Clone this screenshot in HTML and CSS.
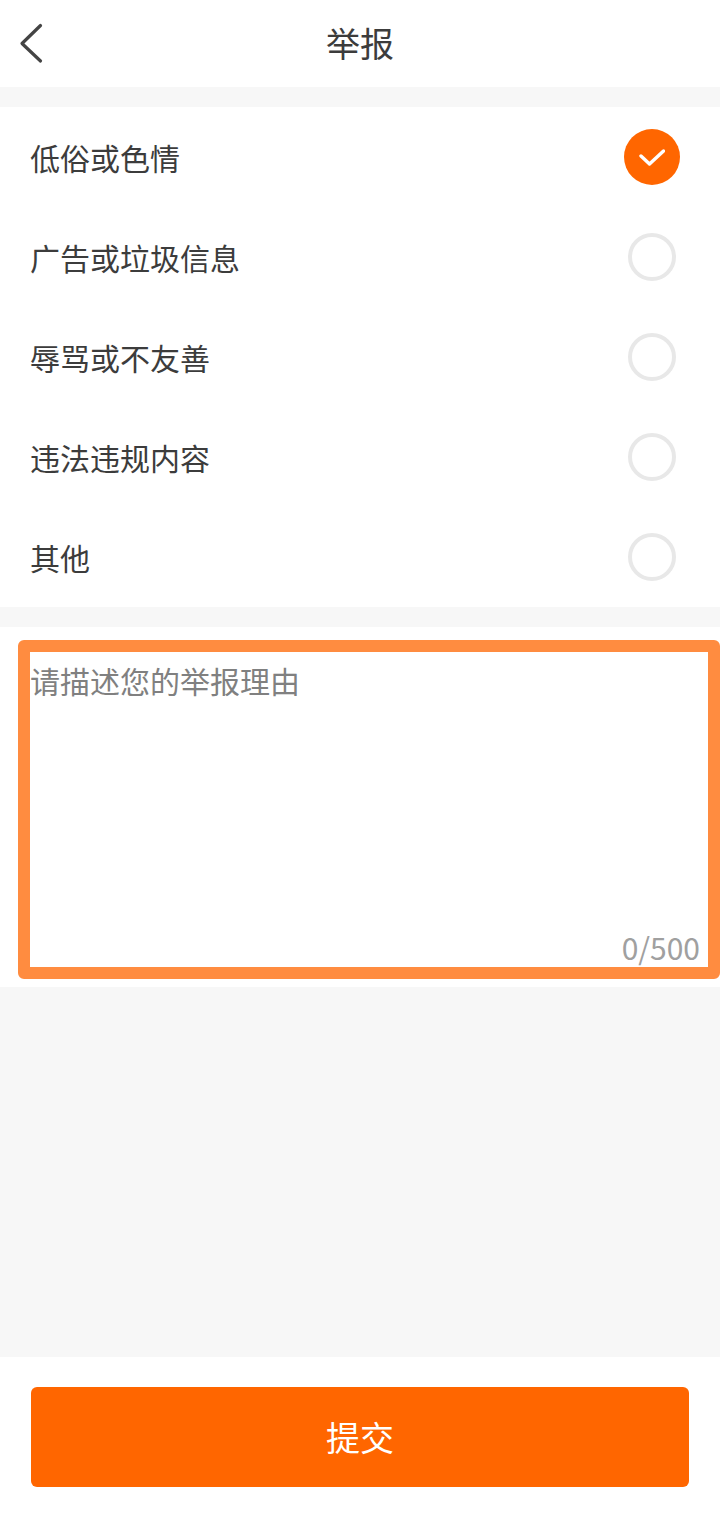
FILE: index.html
```html
<!DOCTYPE html>
<html lang="zh-CN">
<head>
    <meta charset="utf-8">
    <meta name="viewport" content="width=device-width, initial-scale=1.0">
    <link rel="stylesheet" href="styles.css">
</head>
<body>
    <div class="header">
        <svg class="back-icon" width="26" height="42" viewBox="0 0 26 42" aria-label="返回">
            <path d="M21.5 2.5 L3 20.5 L21.5 38" fill="none" stroke="#444" stroke-width="3.2" stroke-linecap="round" stroke-linejoin="round"/>
        </svg>
        <div class="title">举报</div>
    </div>

    <div class="reason-list">
        <div class="reason-item">
            <span class="reason-label">低俗或色情</span>
            <span class="radio checked">
                <svg width="26" height="20" viewBox="0 0 26 20">
                    <path d="M2 9 L10.5 17 L24.5 4" fill="none" stroke="#fff" stroke-width="3.4" stroke-linecap="round" stroke-linejoin="round"/>
                </svg>
            </span>
        </div>
        <div class="reason-item">
            <span class="reason-label">广告或垃圾信息</span>
            <span class="radio"></span>
        </div>
        <div class="reason-item">
            <span class="reason-label">辱骂或不友善</span>
            <span class="radio"></span>
        </div>
        <div class="reason-item">
            <span class="reason-label">违法违规内容</span>
            <span class="radio"></span>
        </div>
        <div class="reason-item">
            <span class="reason-label">其他</span>
            <span class="radio"></span>
        </div>
    </div>

    <div class="reason-box">
        <div class="reason-input">
            <div class="placeholder">请描述您的举报理由</div>
            <div class="counter">0/500</div>
        </div>
    </div>

    <div class="spacer"></div>

    <div class="footer">
        <button class="submit-button">提交</button>
    </div>
</body>
</html>
```

FILE: styles.css
```css
* {
    box-sizing: border-box;
}

html, body {
    height: 100%;
}

body {
    margin: 0;
    display: flex;
    flex-direction: column;
    background: #f7f7f7;
    color: #3c3c3c;
    font-family: "Noto Sans CJK SC", "Noto Sans", sans-serif;
}

.header {
    height: 87px;
    padding-bottom: 2px;
    position: relative;
    display: flex;
    align-items: center;
    justify-content: center;
    background: #fff;
}

.back-icon {
    position: absolute;
    left: 19px;
    top: 23px;
}

.title {
    font-size: 34px;
    line-height: 44px;
    color: #3c3c3c;
}

.reason-list {
    margin-top: 20px;
    background: #fff;
}

.reason-item {
    height: 100px;
    padding: 0 44px 0 30px;
    display: flex;
    align-items: center;
    justify-content: space-between;
}

.reason-label {
    font-size: 30px;
    line-height: 40px;
    color: #3c3c3c;
}

.radio {
    width: 48px;
    height: 48px;
    border-radius: 50%;
    border: 4px solid #e8e8e8;
    display: flex;
    align-items: center;
    justify-content: center;
}

.radio.checked {
    width: 56px;
    height: 56px;
    margin-right: -4px;
    border: none;
    background: #ff6600;
}

.reason-box {
    margin-top: 20px;
    height: 360px;
    padding: 13px 0 8px 18px;
    background: #fff;
}

.reason-input {
    height: 339px;
    position: relative;
    padding-top: 8px;
    background: #fff;
    border: 12px solid #ff8c40;
    border-radius: 6px;
}

.placeholder {
    font-size: 30px;
    line-height: 40px;
    color: #808080;
}

.counter {
    position: absolute;
    right: 8px;
    bottom: 0;
    font-size: 30px;
    line-height: 40px;
    color: #a0a0a0;
}

.spacer {
    flex: 1;
}

.footer {
    height: 160px;
    padding: 30px 31px;
    background: #fff;
}

.submit-button {
    width: 100%;
    height: 100px;
    padding: 0 0 2px;
    border: none;
    border-radius: 6px;
    background: #ff6600;
    color: #fff;
    font-family: inherit;
    font-size: 34px;
}
```
